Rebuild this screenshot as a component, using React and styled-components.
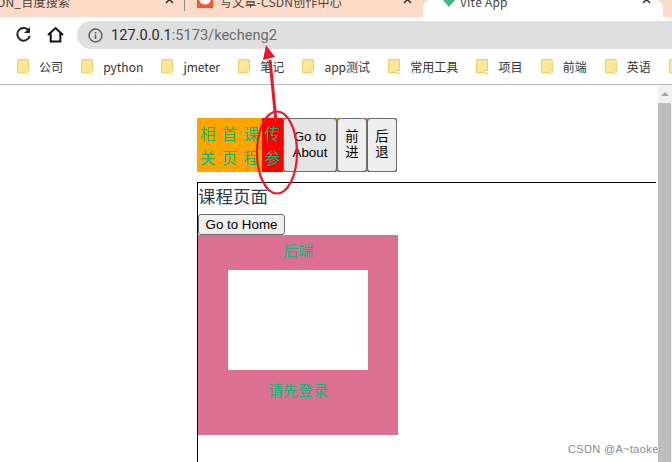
import React from 'react';
import styled, { createGlobalStyle } from 'styled-components';

const CJK = '"Noto Sans CJK SC", "Liberation Sans", sans-serif';

const Global = createGlobalStyle`
  html, body { margin: 0; padding: 0; overflow: hidden; background: #fff; }
  * { box-sizing: border-box; }
`;
const Window = styled.div`
  position: relative; width: 672px; height: 462px; display: flex; flex-direction: column;
  overflow: hidden; font-family: ${CJK};
`;
const TabStrip = styled.div`
  height: 17px; flex: none; background: #fdd9c8; display: flex; overflow: hidden;
  font-size: 12px; color: #444; letter-spacing: 0.2px;
`;
const Tab = styled.div`
  flex: none; width: ${p => p.$w}px; height: 17px; display: flex; align-items: flex-end;
  padding-left: ${p => p.$pl}px; position: relative;
  background: ${p => (p.$active ? '#fff' : 'transparent')};
  border-radius: ${p => (p.$active ? '8px 8px 0 0' : '0')};
`;
const TabLabel = styled.span`
  line-height: 17px; transform: translateY(-7px); white-space: nowrap; flex: 1; overflow: hidden;
`;
const Close = styled.svg`
  width: 9px; height: 9px; flex: none; margin: 0 ${p => p.$mr}px 13px 0;
`;
const Sep = styled.i`
  width: 1px; height: 11px; background: #8d8d8d; flex: none; align-self: flex-start;
`;
const Toolbar = styled.div`
  height: 32px; flex: none; background: #fff; display: flex; align-items: flex-start;
  padding: 4px 0 0 15px;
`;
const NavIcon = styled.svg`
  width: 17px; height: 17px; flex: none; margin: 5px 15px 0 0;
`;
const UrlBar = styled.div`
  flex: 1; height: 28px; margin-left: -2px; margin-right: -12px; background: #dfdfdf; border-radius: 14px;
  display: flex; align-items: center; padding-left: 11px; gap: 8px;
`;
const Url = styled.span`
  font: 14.6px Roboto, sans-serif; color: #6a6a6a; white-space: nowrap;
  b { font-weight: 400; color: #2a2a2a; }
`;
const Bookmarks = styled.div`
  height: 36px; flex: none; background: #fff; border-bottom: 1px solid #b9b9b9;
  display: flex; align-items: center; padding: 0 0 1px 17px; gap: 18.2px; overflow: hidden;
`;
const Bookmark = styled.div`
  display: flex; align-items: center; gap: 10px; flex: none;
  font-size: 12px; color: #333; white-space: nowrap;
`;
const Folder = styled.svg`
  width: 12px; height: 15px; flex: none;
`;
const Body = styled.div`
  flex: 1; min-height: 0; display: flex;
`;
const Viewport = styled.div`
  flex: 1; min-width: 0; padding: 33px 2px 0 197px; overflow: hidden;
`;
const Scrollbar = styled.div`
  width: 14px; flex: none; background: #f1f1f1; display: flex; flex-direction: column;
`;
const ScrollArrow = styled.div`
  height: 18px; flex: none; display: flex; align-items: center; justify-content: center;
  &::before { content: ''; border: 4px solid transparent; border-top: 0; border-bottom: 4px solid #a3a3a3; }
`;
const Thumb = styled.div`
  flex: 1; width: 13px; background: #bdbdbd;
`;
const Nav = styled.nav`
  display: flex; width: 200px; height: 54px; background: orange;
`;
const NavLink = styled.a`
  width: ${p => p.$w}px; flex: none; background: ${p => (p.$on ? 'red' : 'transparent')};
  color: #00bd7e; font-size: 15.5px; line-height: 24px; text-align: center;
  display: flex; flex-direction: column; justify-content: center;
`;
const NavButton = styled.button`
  width: ${p => p.$w}px; flex: none; padding: 0; height: 54px; font: 13.33px/16px "Liberation Sans", ${CJK};
  color: #000; background: ${p => (p.$hover ? '#e5e5e5' : '#efefef')};
  border: 1px solid #6d6d6d; border-radius: 3px; outline: 0.4px solid #6d6d6d; outline-offset: -1px;
`;
const Main = styled.main`
  margin-top: 10px; height: 300px; border-top: 1px solid #000; border-left: 1px solid #000;
`;
const Title = styled.div`
  font-size: 17.5px; line-height: 26px; height: 31px; color: #2c3e50;
`;
const HomeButton = styled.button`
  display: block; width: 87px; height: 21px; padding: 0; font: 13.33px "Liberation Sans", sans-serif; color: #000;
  background: #efefef; border: 1px solid #6d6d6d; border-radius: 3px;
`;
const Card = styled.section`
  width: 200px; height: 200px; background: #db7093; display: flex; flex-direction: column; align-items: center;
  color: #00bd7e; font-size: 15px;
`;
const CardTitle = styled.div`
  height: 35px; line-height: 30px;
`;
const Blank = styled.div`
  width: 140px; height: 100px; background: #fff; flex: none;
`;
const CardNote = styled.div`
  margin-top: 7px; line-height: 26px;
`;
const Overlay = styled.svg`
  position: absolute; inset: 0; width: 672px; height: 462px; pointer-events: none;
`;
const Mark = styled.div`
  position: absolute; left: 568px; top: 441px; font: 11px/16px "Liberation Sans", sans-serif;
  color: #8c8c8c; text-shadow: 0 0 1px #fff, 0 0 2px #fff; white-space: nowrap; letter-spacing: .35px;
`;

const X = ({ mr }) => (
  <Close $mr={mr} viewBox="0 0 9 9"><path d="M1 1l7 7M8 1L1 8" stroke="#333" strokeWidth="1.5" /></Close>
);
const FolderIcon = () => (
  <Folder viewBox="0 0 12 15">
    <path d="M.7.7h10.6v11l-1 2H.7z" fill="#fde89a" stroke="#eccb56" />
    <path d="M9 11.5h3v3H9z" fill="#fff" stroke="#eccb56" strokeWidth=".8" />
  </Folder>
);

const marks = ['公司', 'python', 'jmeter', '笔记', 'app测试', '常用工具', '项目', '前端', '英语', ''];

export default function App() {
  return (
    <Window>
      <Global />
      <TabStrip>
        <Tab $w={184} $pl={0}><TabLabel style={{ marginLeft: -3 }}>DN_百度搜索</TabLabel><X mr={10} /></Tab>
        <Sep />
        <Tab $w={238} $pl={12}>
          <svg width="16" height="8" viewBox="0 0 16 8" style={{ flex: 'none', margin: '0 7px 9px 0' }}>
            <rect width="16" height="8" fill="#f4562f" />
            <path d="M12 -2A5 5 0 0 1 4 -2V-4H2V-1Q3 4.5 8 4.5T14 -1V-4H12z" fill="#fff" />
          </svg>
          <TabLabel>写文章-CSDN创作中心</TabLabel><X mr={11} />
        </Tab>
        <Tab $active $w={240} $pl={20}>
          <svg width="12" height="7" viewBox="0 0 12 7" style={{ flex: 'none', margin: '0 5px 10px 0' }}>
            <path d="M0 0h12L6 7z" fill="#41b883" />
          </svg>
          <TabLabel>Vite App</TabLabel><X mr={12} />
        </Tab>
      </TabStrip>
      <Toolbar>
        <NavIcon viewBox="0 0 17 17">
          <path d="M14 5A6.3 6.3 0 1 0 14.7 10" fill="none" stroke="#222" strokeWidth="2" />
          <path d="M15 1v6H9z" fill="#222" />
        </NavIcon>
        <NavIcon viewBox="0 0 17 17">
          <path d="M1 9l7.5-7L16 9M3.7 7.5V15.5h9.6V7.5" fill="none" stroke="#111" strokeWidth="2" />
        </NavIcon>
        <UrlBar>
          <svg width="15" height="15" viewBox="0 0 15 15" style={{ flex: 'none' }}>
            <circle cx="7.5" cy="7.5" r="6.4" fill="none" stroke="#5f5f5f" strokeWidth="1.5" />
            <path d="M7.5 6.5v4.5M7.5 4v1.6" stroke="#5f5f5f" strokeWidth="1.6" />
          </svg>
          <Url><b>127.0.0.1</b>:5173/kecheng2</Url>
        </UrlBar>
      </Toolbar>
      <Bookmarks>
        {marks.map((m, i) => (
          <Bookmark key={i}><FolderIcon />{m}</Bookmark>
        ))}
      </Bookmarks>
      <Body>
        <Viewport>
          <Nav>
            <NavLink $w={21.7}>相<br />关</NavLink>
            <NavLink $w={21.7}>首<br />页</NavLink>
            <NavLink $w={21.6}>课<br />程</NavLink>
            <NavLink $w={21} $on>传<br />参</NavLink>
            <NavButton $w={54} $hover>Go to<br />About</NavButton>
            <NavButton $w={30}>前<br />进</NavButton>
            <NavButton $w={30}>后<br />退</NavButton>
          </Nav>
          <Main>
            <Title>课程页面</Title>
            <HomeButton>Go to Home</HomeButton>
            <Card>
              <CardTitle>后端</CardTitle>
              <Blank />
              <CardNote>请先登录</CardNote>
            </Card>
          </Main>
        </Viewport>
        <Scrollbar>
          <ScrollArrow />
          <Thumb />
        </Scrollbar>
      </Body>
      <Overlay viewBox="0 0 672 462">
        <ellipse cx="277" cy="152.5" rx="20" ry="41" fill="none" stroke="#e8182c" strokeWidth="2.2" />
        <path d="M276 122L270 60" stroke="#e8182c" strokeWidth="3" />
        <path d="M266 45L275 57 263 60z" fill="#e8182c" />
      </Overlay>
      <Mark>CSDN @A~taoker</Mark>
    </Window>
  );
}
